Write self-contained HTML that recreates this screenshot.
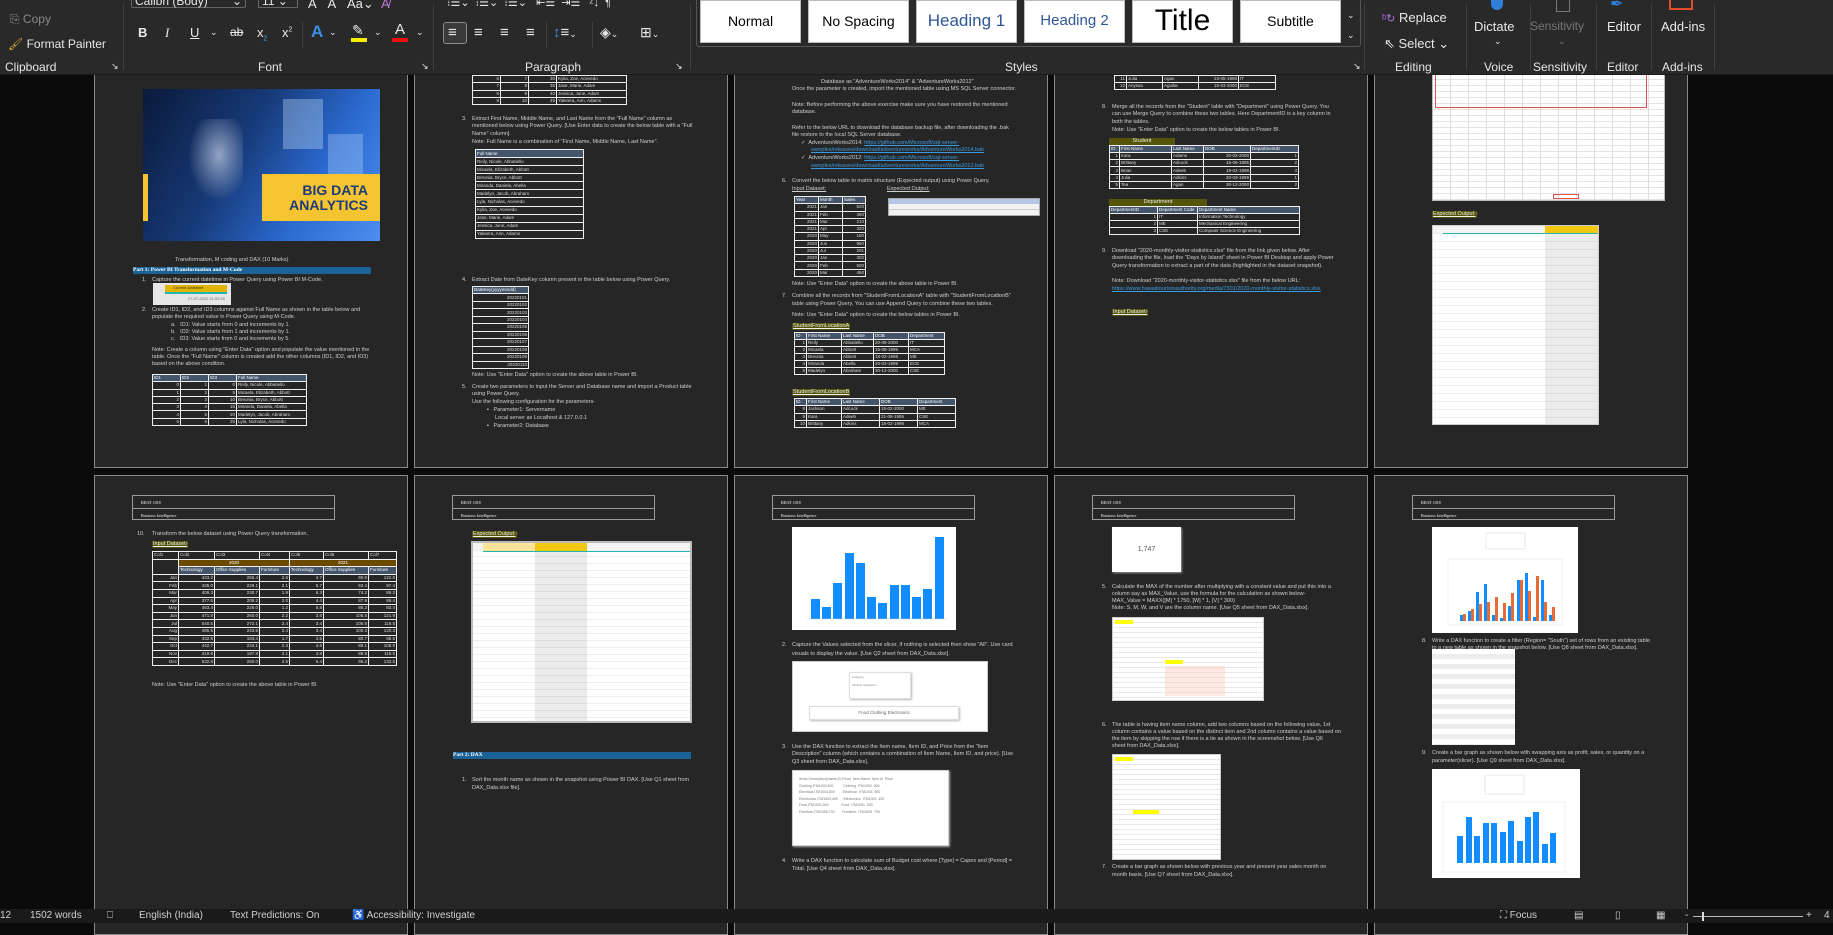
<!DOCTYPE html>
<html><head><meta charset="utf-8">
<style>
*{margin:0;padding:0;box-sizing:border-box}
body{width:1833px;height:923px;background:#0b0b0b;position:relative;overflow:hidden;font-family:"Liberation Sans",sans-serif}
.rb{position:absolute;left:0;top:0;width:1833px;height:75px;background:#292929;z-index:10;border-bottom:1px solid #1a1a1a}
.r{position:absolute;color:#e8e8e8;font-size:12px;white-space:nowrap}
.gl{position:absolute;top:60px;color:#e6e6e6;font-size:12px;white-space:nowrap}
.sep{position:absolute;top:4px;width:1px;height:66px;background:#3f3f3f}
.sb{position:absolute;top:0;height:43px;background:#fff;border:1px solid #bbb;color:#000;font-size:14px;text-align:center;line-height:40px}
.st{position:absolute;left:0;top:909px;width:1833px;height:14px;background:#1a1a1a;z-index:10}
.s{position:absolute;top:0;font-size:10px;color:#d0d0d0;white-space:nowrap;line-height:14px}
.pg{position:absolute;width:314px;background:#262626;border:1px solid #8a8a8a;overflow:hidden}
.t{position:absolute;font-size:5.5px;color:#cfcfcf;white-space:nowrap;line-height:7px}
.n{position:absolute;font-size:5.5px;color:#cfcfcf;line-height:7px}
.lab{position:absolute;font-size:5.5px;color:#eee;background:#55550a;line-height:7px;padding:0 1px;text-decoration:underline}
table.g{position:absolute;border-collapse:collapse;font-size:4.5px;color:#ddd;table-layout:fixed}
table.g td{border:1px solid #f0f0f0;padding:0 1px;overflow:hidden;white-space:nowrap;line-height:4px}
table.g tr.h td{background:#44546a;color:#fff}
.img{position:absolute;background:#fff;overflow:hidden}
.hb{position:absolute;left:37px;top:19px;width:203px;height:25px;border:1px solid #9a9a9a}
.hb div{height:12px;font-size:4px;color:#bbb;padding:4px 0 0 8px;font-weight:bold;font-family:"Liberation Serif",serif}
.hb div+div{border-top:1px solid #9a9a9a}
.bar{position:absolute;height:7px;background:#1b6396;font-size:5.5px;color:#fff;font-weight:bold;line-height:7px;font-family:"Liberation Serif",serif}
.lnk{color:#3b9be0;text-decoration:underline}
</style></head><body>

<!-- RIBBON -->
<div class="rb">
  <div class="r" style="left:131px;top:-6px;width:115px;height:14px;border:1px solid #666;border-top:none;border-radius:2px;padding-left:3px;font-size:12px">Calibri (Body) <span style="float:right;padding-right:3px">⌄</span></div>
  <div class="r" style="left:258px;top:-6px;width:40px;height:14px;border:1px solid #666;border-top:none;padding-left:3px">11 ⌄</div>
  <div class="r" style="left:308px;top:-4px;font-size:13px">A&nbsp;&nbsp;&nbsp;A&nbsp;&nbsp;&nbsp;Aa⌄&nbsp;&nbsp;<span style="color:#c07ad8">A̸</span></div>
  <div class="r" style="left:10px;top:12px;color:#8a8a8a;font-size:12px">⎘ Copy</div>
  <div class="r" style="left:8px;top:37px;font-size:12px"><span style="color:#e0b030">🖌</span> Format Painter</div>
  <div class="gl" style="left:5px">Clipboard</div><div class="r" style="left:111px;top:61px;font-size:9px">↘</div>
  <div class="sep" style="left:123px"></div>
  <div class="r" style="left:138px;top:25px;font-size:13px;font-weight:bold">B</div>
  <div class="r" style="left:165px;top:25px;font-size:13px;font-style:italic;font-family:'Liberation Serif'">I</div>
  <div class="r" style="left:190px;top:25px;font-size:13px;text-decoration:underline">U</div><div class="r" style="left:210px;top:27px;font-size:9px">⌄</div>
  <div class="r" style="left:230px;top:25px;font-size:12px;text-decoration:line-through">ab</div>
  <div class="r" style="left:257px;top:25px;font-size:13px">x<sub style="font-size:7px;color:#5aa0e0">2</sub></div>
  <div class="r" style="left:282px;top:25px;font-size:13px">x<sup style="font-size:7px">2</sup></div>
  <div class="sep" style="left:302px;top:22px;height:26px"></div>
  <div class="r" style="left:311px;top:22px;font-size:17px;color:#3a8ee6;font-weight:bold">A</div><div class="r" style="left:329px;top:27px;font-size:9px">⌄</div>
  <div class="r" style="left:352px;top:22px;font-size:14px">✎</div><div style="position:absolute;left:351px;top:38px;width:16px;height:4px;background:#f5ef00"></div><div class="r" style="left:374px;top:27px;font-size:9px">⌄</div>
  <div class="r" style="left:395px;top:21px;font-size:15px">A</div><div style="position:absolute;left:392px;top:38px;width:16px;height:4px;background:#e81010"></div><div class="r" style="left:416px;top:27px;font-size:9px">⌄</div>
  <div class="gl" style="left:258px">Font</div><div class="r" style="left:421px;top:61px;font-size:9px">↘</div>
  <div class="sep" style="left:433px"></div>
  <div class="r" style="left:447px;top:-4px;font-size:11px">⁝☰⌄&nbsp;&nbsp;⁝☰⌄&nbsp;&nbsp;⁝☰⌄&nbsp;&nbsp;&nbsp;⇤☰&nbsp;&nbsp;⇥☰&nbsp;&nbsp;&nbsp;ᶻ↓&nbsp;&nbsp;¶</div>
  <div style="position:absolute;left:443px;top:22px;width:24px;height:22px;border:1px solid #8a8a8a;border-radius:3px;background:#3a3a3a"></div>
  <div class="r" style="left:448px;top:24px;font-size:15px">≡</div>
  <div class="r" style="left:474px;top:24px;font-size:15px">≡</div>
  <div class="r" style="left:500px;top:24px;font-size:15px">≡</div>
  <div class="r" style="left:526px;top:24px;font-size:15px">≡</div>
  <div class="sep" style="left:546px;top:22px;height:26px"></div>
  <div class="r" style="left:553px;top:24px;font-size:15px"><span style="color:#3a8ee6">↕</span>≡<span style="font-size:9px">⌄</span></div>
  <div class="sep" style="left:592px;top:22px;height:26px"></div>
  <div class="r" style="left:600px;top:24px;font-size:14px">◈<span style="font-size:9px">⌄</span></div>
  <div class="r" style="left:640px;top:24px;font-size:14px">⊞<span style="font-size:9px">⌄</span></div>
  <div class="gl" style="left:525px">Paragraph</div><div class="r" style="left:675px;top:61px;font-size:9px">↘</div>
  <div class="sep" style="left:690px"></div>
  <div style="position:absolute;left:696px;top:-2px;width:665px;height:49px;border:1px solid #555;border-radius:3px"></div>
  <div class="sb" style="left:700px;width:101px">Normal</div>
  <div class="sb" style="left:808px;width:101px">No Spacing</div>
  <div class="sb" style="left:916px;width:101px;color:#2f5597;font-size:17px">Heading 1</div>
  <div class="sb" style="left:1024px;width:101px;color:#2f5597;font-size:15px">Heading 2</div>
  <div class="sb" style="left:1132px;width:101px;font-size:30px;font-weight:300">Title</div>
  <div class="sb" style="left:1240px;width:101px;font-size:14px">Subtitle</div>
  <div class="r" style="left:1347px;top:10px;font-size:9px">⌄</div>
  <div class="r" style="left:1347px;top:30px;font-size:9px">⌄</div>
  <div class="gl" style="left:1005px">Styles</div><div class="r" style="left:1353px;top:61px;font-size:9px">↘</div>
  <div class="sep" style="left:1364px"></div>
  <div class="r" style="left:1382px;top:10px;font-size:13px"><span style="color:#b070e0;font-size:11px">ᵇ↻</span> Replace</div>
  <div class="r" style="left:1384px;top:36px;font-size:13px">⇖ Select ⌄</div>
  <div class="gl" style="left:1395px">Editing</div>
  <div class="sep" style="left:1466px"></div>
  <div style="position:absolute;left:1491px;top:-6px;width:12px;height:16px;border-radius:6px;background:#2f7fd8"></div>
  <div class="r" style="left:1474px;top:19px;font-size:13px">Dictate</div><div class="r" style="left:1494px;top:36px;font-size:9px">⌄</div>
  <div class="gl" style="left:1484px">Voice</div>
  <div class="sep" style="left:1530px"></div>
  <div style="position:absolute;left:1556px;top:-4px;width:14px;height:16px;border:1px solid #777"></div>
  <div class="r" style="left:1530px;top:19px;font-size:12px;color:#777">Sensitivity</div><div class="r" style="left:1558px;top:36px;font-size:9px;color:#777">⌄</div>
  <div class="gl" style="left:1533px">Sensitivity</div>
  <div class="sep" style="left:1596px"></div>
  <div class="r" style="left:1610px;top:-6px;font-size:16px;color:#2f7fd8">✒</div>
  <div class="r" style="left:1607px;top:19px;font-size:13px">Editor</div>
  <div class="gl" style="left:1607px">Editor</div>
  <div class="sep" style="left:1651px"></div>
  <div style="position:absolute;left:1669px;top:-4px;width:24px;height:14px;border:2px solid #e0502a"></div>
  <div class="r" style="left:1661px;top:19px;font-size:13px">Add-ins</div>
  <div class="gl" style="left:1662px">Add-ins</div>
  <div class="sep" style="left:1714px"></div>
</div>

<!-- ROW 1 -->
<div class="pg" style="left:94px;top:40px;height:428px">
 <div style="position:absolute;left:48px;top:48px;width:237px;height:152px;background:linear-gradient(120deg,#0a1a3a 0%,#173a78 40%,#2b6ad0 70%,#4c8ff0 100%);overflow:hidden">
  <div style="position:absolute;left:40px;top:30px;width:60px;height:90px;background:radial-gradient(ellipse at 60% 40%,rgba(200,210,230,.7),rgba(0,0,0,0) 60%)"></div>
  <div style="position:absolute;left:140px;top:10px;width:40px;height:50px;background:rgba(200,230,255,.35)"></div>
  <div style="position:absolute;left:185px;top:45px;width:35px;height:40px;background:rgba(200,230,255,.3)"></div>
  <div style="position:absolute;left:0;top:85px;width:5px;height:47px;background:#f5c531"></div>
  <div style="position:absolute;left:119px;top:85px;width:118px;height:47px;background:#f5c531;color:#1d3a7a;font-weight:bold;font-size:14px;line-height:15px;text-align:right;padding:9px 12px 0 0">BIG DATA<br>ANALYTICS</div>
 </div>
 <div class="t" style="left:80px;top:216px">Transformation, M coding and DAX (10 Marks)</div>
 <div class="bar" style="left:38px;top:226px;width:238px">Part 1: Power BI Transformation and M-Code</div>
 <div class="n" style="left:47px;top:236px">1.</div><div class="t" style="left:57px;top:236px">Capture the current datetime in Power Query using Power BI M-Code.</div>
 <div class="img" style="left:58px;top:242px;width:78px;height:22px;background:#e6e6e6"><div style="position:absolute;left:12px;top:2px;width:62px;height:7px;background:#e0b400;font-size:4px;color:#333;padding-left:8px">Current Datetime</div><div style="position:absolute;left:12px;top:9px;width:62px;height:2px;background:#1fb5b0"></div><div style="position:absolute;right:6px;top:13px;font-size:4px;color:#666">27-07-2022 21:02:50</div></div>
 <div class="n" style="left:47px;top:266px">2.</div><div class="t" style="left:57px;top:266px">Create ID1, ID2, and ID3 columns against Full Name as shown in the table below and</div>
 <div class="t" style="left:57px;top:273px">populate the required value in Power Query using M-Code.</div>
 <div class="t" style="left:76px;top:281px">a.&nbsp;&nbsp; ID1: Value starts from 0 and increments by 1.</div>
 <div class="t" style="left:76px;top:288px">b.&nbsp;&nbsp; ID2: Value starts from 1 and increments by 1.</div>
 <div class="t" style="left:76px;top:295px">c.&nbsp;&nbsp; ID3: Value starts from 0 and increments by 5.</div>
 <div class="t" style="left:57px;top:306px">Note: Create a column using "Enter Data" option and populate the value mentioned in the</div>
 <div class="t" style="left:57px;top:313px">table. Once the "Full Name" column is created add the other columns (ID1, ID2, and ID3)</div>
 <div class="t" style="left:57px;top:320px">based on the above condition.</div>
 <table class="g" style="left:57px;top:333px;width:155px;height:52px"><colgroup><col style="width:28px"><col style="width:28px"><col style="width:28px"><col></colgroup>
 <tr class="h"><td>ID1</td><td>ID2</td><td>ID3</td><td>Full Name</td></tr>
 <tr><td align=right>0</td><td align=right>1</td><td align=right>0</td><td>Reily, Nicole, Abbatiello</td></tr>
 <tr><td align=right>1</td><td align=right>2</td><td align=right>5</td><td>Micaela, Elizabeth, Abbott</td></tr>
 <tr><td align=right>2</td><td align=right>3</td><td align=right>10</td><td>Breonia, Bryce, Abbott</td></tr>
 <tr><td align=right>3</td><td align=right>4</td><td align=right>15</td><td>Miranda, Daniela, Abella</td></tr>
 <tr><td align=right>4</td><td align=right>5</td><td align=right>20</td><td>Madelyn, Jacob, Abraham</td></tr>
 <tr><td align=right>5</td><td align=right>6</td><td align=right>25</td><td>Lyla, Nicholas, Acevedo</td></tr></table>
</div>

<div class="pg" style="left:414px;top:40px;height:428px">
 <table class="g" style="left:57px;top:34px;width:155px;height:30px"><colgroup><col style="width:28px"><col style="width:28px"><col style="width:28px"><col></colgroup>
 <tr><td align=right>6</td><td align=right>7</td><td align=right>30</td><td>Kylia, Zoe, Acevedo</td></tr>
 <tr><td align=right>7</td><td align=right>8</td><td align=right>35</td><td>Jase, Marie, Adam</td></tr>
 <tr><td align=right>8</td><td align=right>9</td><td align=right>40</td><td>Jessica, June, Adam</td></tr>
 <tr><td align=right>9</td><td align=right>10</td><td align=right>45</td><td>Yakeera, Ann, Adams</td></tr></table>
 <div class="n" style="left:47px;top:75px">3.</div><div class="t" style="left:57px;top:75px">Extract First Name, Middle Name, and Last Name from the "Full Name" column as</div>
 <div class="t" style="left:57px;top:82px">mentioned below using Power Query. [Use Enter data to create the below table with a "Full</div>
 <div class="t" style="left:57px;top:90px">Name" column].</div>
 <div class="t" style="left:57px;top:98px">Note: Full Name is a combination of "First Name, Middle Name, Last Name".</div>
 <table class="g" style="left:60px;top:108px;width:109px;height:90px">
 <tr class="h"><td>Full Name</td></tr><tr><td>Reily, Nicole, Abbatiello</td></tr><tr><td>Micaela, Elizabeth, Abbott</td></tr><tr><td>Breonia, Bryce, Abbott</td></tr><tr><td>Miranda, Daniela, Abella</td></tr><tr><td>Madelyn, Jacob, Abraham</td></tr><tr><td>Lyla, Nicholas, Acevedo</td></tr><tr><td>Kylia, Zoe, Acevedo</td></tr><tr><td>Jase, Marie, Adam</td></tr><tr><td>Jessica, June, Adam</td></tr><tr><td>Yakeera, Ann, Adams</td></tr></table>
 <div class="n" style="left:47px;top:236px">4.</div><div class="t" style="left:57px;top:236px">Extract Date from DateKey column present in the table below using Power Query.</div>
 <table class="g" style="left:57px;top:245px;width:57px;height:83px">
 <tr class="h"><td>DateKey(yyyymmdd)</td></tr><tr><td align=right>20220101</td></tr><tr><td align=right>20220102</td></tr><tr><td align=right>20220103</td></tr><tr><td align=right>20220104</td></tr><tr><td align=right>20220105</td></tr><tr><td align=right>20220106</td></tr><tr><td align=right>20220107</td></tr><tr><td align=right>20220108</td></tr><tr><td align=right>20220109</td></tr><tr><td align=right>20220110</td></tr></table>
 <div class="t" style="left:57px;top:331px">Note: Use "Enter Data" option to create the above table in Power BI.</div>
 <div class="n" style="left:47px;top:343px">5.</div><div class="t" style="left:57px;top:343px">Create two parameters to input the Server and Database name and import a Product table</div>
 <div class="t" style="left:57px;top:350px">using Power Query.</div>
 <div class="t" style="left:57px;top:358px">Use the following configuration for the parameters-</div>
 <div class="t" style="left:72px;top:366px">▪&nbsp;&nbsp; Parameter1: Servername</div>
 <div class="t" style="left:80px;top:374px">Local server as Localhost &amp; 127.0.0.1</div>
 <div class="t" style="left:72px;top:382px">▪&nbsp;&nbsp; Parameter2: Database</div>
</div>

<div class="pg" style="left:734px;top:40px;height:428px">
 <div class="t" style="left:86px;top:38px">Database as "AdventureWorks2014" &amp; "AdventureWorks2012"</div>
 <div class="t" style="left:57px;top:45px">Once the parameter is created, import the mentioned table using MS SQL Server connector.</div>
 <div class="t" style="left:57px;top:61px">Note: Before performing the above exercise make sure you have restored the mentioned</div>
 <div class="t" style="left:57px;top:68px">database.</div>
 <div class="t" style="left:57px;top:84px">Refer to the below URL to download the database backup file, after downloading the .bak</div>
 <div class="t" style="left:57px;top:91px">file restore to the local SQL Server database.</div>
 <div class="t" style="left:66px;top:99px">✓&nbsp; AdventureWorks2014: <span class="lnk">https://github.com/Microsoft/sql-server-</span></div>
 <div class="t" style="left:76px;top:106px"><span class="lnk">samples/releases/download/adventureworks/AdventureWorks2014.bak</span></div>
 <div class="t" style="left:66px;top:114px">✓&nbsp; AdventureWorks2012: <span class="lnk">https://github.com/Microsoft/sql-server-</span></div>
 <div class="t" style="left:76px;top:122px"><span class="lnk">samples/releases/download/adventureworks/AdventureWorks2012.bak</span></div>
 <div class="n" style="left:47px;top:137px">6.</div><div class="t" style="left:57px;top:137px">Convert the below table to matrix structure (Expected output) using Power Query.</div>
 <div class="t" style="left:57px;top:145px;text-decoration:underline">Input Dataset:</div><div class="t" style="left:152px;top:145px;text-decoration:underline">Expected Output:</div>
 <table class="g" style="left:59px;top:155px;width:72px;height:81px"><colgroup><col style="width:24px"><col style="width:24px"><col></colgroup>
 <tr class="h"><td>Year</td><td>Month</td><td>Sales</td></tr>
 <tr><td align=right>2021</td><td>Jan</td><td align=right>520</td></tr><tr><td align=right>2021</td><td>Feb</td><td align=right>360</td></tr><tr><td align=right>2021</td><td>Mar</td><td align=right>210</td></tr><tr><td align=right>2021</td><td>Apr</td><td align=right>320</td></tr><tr><td align=right>2020</td><td>May</td><td align=right>160</td></tr><tr><td align=right>2020</td><td>Jun</td><td align=right>960</td></tr><tr><td align=right>2020</td><td>Jul</td><td align=right>201</td></tr><tr><td align=right>2020</td><td>Jan</td><td align=right>302</td></tr><tr><td align=right>2020</td><td>Feb</td><td align=right>500</td></tr><tr><td align=right>2020</td><td>Mar</td><td align=right>450</td></tr></table>
 <div class="img" style="left:153px;top:157px;width:152px;height:18px;background:#f2f2f2;border:1px solid #aaa"><div style="height:5px;background:#b4c7e7"></div><div style="height:1px;margin-top:5px;background:#ccc"></div></div>
 <div class="t" style="left:57px;top:240px">Note: Use "Enter Data" option to create the above table in Power BI.</div>
 <div class="n" style="left:47px;top:252px">7.</div><div class="t" style="left:57px;top:252px">Combine all the records from "StudentFromLocationA" table with "StudentFromLocationB"</div>
 <div class="t" style="left:57px;top:260px">table using Power Query. You can use Append Query to combine these two tables.</div>
 <div class="t" style="left:57px;top:271px">Note: Use "Enter Data" option to create the below tables in Power BI.</div>
 <div class="lab" style="left:57px;top:282px">StudentFromLocationA</div><div class="t" style="left:98px;top:282px">:</div>
 <table class="g" style="left:59px;top:291px;width:151px;height:43px"><colgroup><col style="width:12px"><col style="width:35px"><col style="width:32px"><col style="width:35px"><col></colgroup>
 <tr class="h"><td>ID</td><td>First Name</td><td>Last Name</td><td>DOB</td><td>Department</td></tr>
 <tr><td align=right>1</td><td>Reily</td><td>Abbatiello</td><td>20-08-2000</td><td>IT</td></tr><tr><td align=right>2</td><td>Micaela</td><td>Abbott</td><td>15-08-1995</td><td>MCA</td></tr><tr><td align=right>3</td><td>Breonia</td><td>Abbott</td><td>18-02-1998</td><td>ME</td></tr><tr><td align=right>4</td><td>Miranda</td><td>Abella</td><td>20-03-1999</td><td>ECE</td></tr><tr><td align=right>5</td><td>Madelyn</td><td>Abraham</td><td>30-12-2000</td><td>CSE</td></tr></table>
 <div class="lab" style="left:57px;top:348px">StudentFromLocationB</div><div class="t" style="left:98px;top:348px">:</div>
 <table class="g" style="left:59px;top:357px;width:162px;height:30px"><colgroup><col style="width:12px"><col style="width:35px"><col style="width:38px"><col style="width:38px"><col></colgroup>
 <tr class="h"><td>ID</td><td>First Name</td><td>Last Name</td><td>DOB</td><td>Department</td></tr>
 <tr><td align=right>8</td><td>Jackson</td><td>Adcock</td><td>15-02-2000</td><td>ME</td></tr><tr><td align=right>9</td><td>Kara</td><td>Adeeb</td><td>21-08-1995</td><td>CSE</td></tr><tr><td align=right>10</td><td>Brittany</td><td>Adkins</td><td>18-02-1995</td><td>MCA</td></tr></table>
</div>

<div class="pg" style="left:1054px;top:40px;height:428px">
 <table class="g" style="left:59px;top:34px;width:162px;height:15px"><colgroup><col style="width:12px"><col style="width:36px"><col style="width:36px"><col style="width:40px"><col></colgroup>
 <tr><td align=right>11</td><td>Julia</td><td>Agan</td><td align=right>23-05-1998</td><td>IT</td></tr><tr><td align=right>12</td><td>Anyssa</td><td>Aguilar</td><td align=right>15-03-2000</td><td>ECE</td></tr></table>
 <div class="n" style="left:47px;top:63px">8.</div><div class="t" style="left:57px;top:63px">Merge all the records from the "Student" table with "Department" using Power Query. You</div>
 <div class="t" style="left:57px;top:70px">can use Merge Query to combine these two tables. Here DepartmentID is a key column in</div>
 <div class="t" style="left:57px;top:78px">both the tables.</div>
 <div class="t" style="left:57px;top:86px">Note: Use "Enter Data" option to create the below tables in Power BI.</div>
 <div style="position:absolute;left:54px;top:97px;width:66px;height:7px;background:#55550a;font-size:5.5px;color:#eee;text-align:center;line-height:7px">Student</div>
 <table class="g" style="left:54px;top:104px;width:190px;height:44px"><colgroup><col style="width:10px"><col style="width:52px"><col style="width:32px"><col style="width:47px"><col></colgroup>
 <tr class="h"><td>ID</td><td>First Name</td><td>Last Name</td><td>DOB</td><td>DepartmentID</td></tr>
 <tr><td align=right>1</td><td>Kara</td><td>Adams</td><td align=right>20-02-2000</td><td align=right>1</td></tr><tr><td align=right>2</td><td>Brittany</td><td>Adcock</td><td align=right>15-08-1995</td><td align=right>2</td></tr><tr><td align=right>3</td><td>Brian</td><td>Adeeb</td><td align=right>18-02-1998</td><td align=right>3</td></tr><tr><td align=right>4</td><td>Julia</td><td>Adkins</td><td align=right>20-03-1999</td><td align=right>1</td></tr><tr><td align=right>5</td><td>Tea</td><td>Agan</td><td align=right>30-12-2000</td><td align=right>2</td></tr></table>
 <div style="position:absolute;left:54px;top:158px;width:98px;height:7px;background:#55550a;font-size:5.5px;color:#eee;text-align:center;line-height:7px">Department</div>
 <table class="g" style="left:54px;top:165px;width:191px;height:29px"><colgroup><col style="width:48px"><col style="width:40px"><col></colgroup>
 <tr class="h"><td>DepartmentID</td><td>Department Code</td><td>Department Name</td></tr>
 <tr><td align=right>1</td><td>IT</td><td>Information Technology</td></tr><tr><td align=right>2</td><td>ME</td><td>Mechanical Engineering</td></tr><tr><td align=right>3</td><td>CSE</td><td>Computer Science Engineering</td></tr></table>
 <div class="n" style="left:47px;top:207px">9.</div><div class="t" style="left:57px;top:207px">Download "2020-monthly-visitor-statistics.xlsx" file from the link given below. After</div>
 <div class="t" style="left:57px;top:214px">downloading the file, load the "Days by Island" sheet in Power BI Desktop and apply Power</div>
 <div class="t" style="left:57px;top:222px">Query transformation to extract a part of the data (highlighted in the dataset snapshot).</div>
 <div class="t" style="left:57px;top:237px">Note: Download "2020-monthly-visitor-statistics.xlsx" file from the below URL:</div>
 <div class="t" style="left:57px;top:245px"><span class="lnk">https://www.hawaiitourismauthority.org/media/7301/2020-monthly-visitor-statistics.xlsx</span></div>
 <div class="lab" style="left:57px;top:268px">Input Dataset:</div><div class="t" style="left:91px;top:268px">-</div>
</div>

<div class="pg" style="left:1374px;top:40px;height:428px">
 <div class="img" style="left:57px;top:20px;width:233px;height:140px;border:1px solid #bbb;background:#fff repeating-linear-gradient(to bottom,#fff 0 5px,#e4e4e4 5px 6px)">
  <div style="position:absolute;left:0;top:0;width:233px;height:140px;background:repeating-linear-gradient(to right,transparent 0 17px,#ddd 17px 18px)"></div>
  <div style="position:absolute;left:2px;top:8px;width:212px;height:38px;border:1px solid #e05050"></div>
  <div style="position:absolute;left:120px;top:132px;width:26px;height:5px;border:1px solid #e05050"></div>
 </div>
 <div class="lab" style="left:57px;top:170px">Expected Output:</div><div class="t" style="left:101px;top:170px">-</div>
 <div class="img" style="left:57px;top:184px;width:167px;height:200px;border:1px solid #ccc;background:#fff repeating-linear-gradient(to bottom,#fff 0 7px,#eee 7px 8px)">
  <div style="position:absolute;left:0;top:0;width:167px;height:7px;background:#f3f3f3"></div>
  <div style="position:absolute;left:112px;top:0;width:55px;height:7px;background:#f2c811"></div>
  <div style="position:absolute;left:10px;top:7px;width:157px;height:1px;background:#1fb5b0"></div>
  <div style="position:absolute;left:112px;top:8px;width:55px;height:192px;background:rgba(0,0,0,.08)"></div>
 </div>
</div>

<!-- ROW 2 -->
<div class="pg" style="left:94px;top:475px;height:460px">
 <div class="hb"><div>BDAT 1018</div><div>Business Intelligence</div></div>
 <div class="n" style="left:42px;top:55px">10.</div><div class="t" style="left:57px;top:55px">Transform the below dataset using Power Query transformation.</div>
 <div class="lab" style="left:57px;top:65px">Input Dataset:</div><div class="t" style="left:91px;top:65px">-</div>
 <table class="g" style="left:57px;top:75px;width:245px;height:115px"><colgroup><col style="width:26px"><col style="width:36px"><col style="width:45px"><col style="width:30px"><col style="width:34px"><col style="width:45px"><col></colgroup>
 <tr><td>Col1</td><td>Col2</td><td>Col3</td><td>Col4</td><td>Col5</td><td>Col6</td><td>Col7</td></tr>
 <tr><td rowspan=2></td><td colspan=3 style="background:#6b4a00;text-align:center;color:#fff">2020</td><td colspan=3 style="background:#6b4a00;text-align:center;color:#fff">2021</td></tr>
 <tr class="h"><td>Technology</td><td>Office Supplies</td><td>Furniture</td><td>Technology</td><td>Office Supplies</td><td>Furniture</td></tr>
 <tr><td align=right>Jan</td><td align=right>433.2</td><td align=right>255.4</td><td align=right>2.6</td><td align=right>4.7</td><td align=right>90.9</td><td align=right>122.8</td></tr>
 <tr><td align=right>Feb</td><td align=right>435.0</td><td align=right>229.1</td><td align=right>2.1</td><td align=right>5.7</td><td align=right>93.4</td><td align=right>97.4</td></tr>
 <tr><td align=right>Mar</td><td align=right>409.3</td><td align=right>230.7</td><td align=right>1.9</td><td align=right>6.3</td><td align=right>74.2</td><td align=right>89.2</td></tr>
 <tr><td align=right>Apr</td><td align=right>377.6</td><td align=right>209.2</td><td align=right>2.0</td><td align=right>4.4</td><td align=right>87.9</td><td align=right>86.4</td></tr>
 <tr><td align=right>May</td><td align=right>463.4</td><td align=right>226.0</td><td align=right>1.2</td><td align=right>5.8</td><td align=right>86.3</td><td align=right>83.4</td></tr>
 <tr><td align=right>Jun</td><td align=right>471.8</td><td align=right>260.0</td><td align=right>2.2</td><td align=right>3.8</td><td align=right>106.5</td><td align=right>121.9</td></tr>
 <tr><td align=right>Jul</td><td align=right>540.5</td><td align=right>272.1</td><td align=right>2.4</td><td align=right>3.4</td><td align=right>106.5</td><td align=right>116.5</td></tr>
 <tr><td align=right>Aug</td><td align=right>485.5</td><td align=right>243.6</td><td align=right>2.4</td><td align=right>3.4</td><td align=right>100.3</td><td align=right>120.3</td></tr>
 <tr><td align=right>Sep</td><td align=right>432.8</td><td align=right>183.4</td><td align=right>1.7</td><td align=right>3.5</td><td align=right>80.7</td><td align=right>95.6</td></tr>
 <tr><td align=right>Oct</td><td align=right>442.7</td><td align=right>234.1</td><td align=right>2.3</td><td align=right>4.6</td><td align=right>88.1</td><td align=right>108.9</td></tr>
 <tr><td align=right>Nov</td><td align=right>419.8</td><td align=right>197.8</td><td align=right>2.1</td><td align=right>4.8</td><td align=right>89.9</td><td align=right>116.5</td></tr>
 <tr><td align=right>Dec</td><td align=right>532.8</td><td align=right>260.0</td><td align=right>2.5</td><td align=right>6.4</td><td align=right>96.2</td><td align=right>133.5</td></tr></table>
 <div class="t" style="left:57px;top:206px">Note: Use "Enter Data" option to create the above table in Power BI.</div>
</div>

<div class="pg" style="left:414px;top:475px;height:460px">
 <div class="hb"><div>BDAT 1018</div><div>Business Intelligence</div></div>
 <div class="lab" style="left:57px;top:55px">Expected Output:</div><div class="t" style="left:101px;top:55px">-</div>
 <div class="img" style="left:56px;top:65px;width:221px;height:182px;border:2px solid #bbb;background:#fff repeating-linear-gradient(to bottom,#fff 0 6px,#eee 6px 7px)">
  <div style="position:absolute;left:0;top:0;width:221px;height:8px;background:#f3f3f3"></div>
  <div style="position:absolute;left:10px;top:0;width:52px;height:8px;background:#fbe39a"></div>
  <div style="position:absolute;left:62px;top:0;width:52px;height:8px;background:#f2c811"></div>
  <div style="position:absolute;left:10px;top:8px;width:211px;height:1px;background:#1fb5b0"></div>
  <div style="position:absolute;left:62px;top:9px;width:52px;height:173px;background:rgba(0,0,0,.08)"></div>
 </div>
 <div class="bar" style="left:38px;top:276px;width:238px">Part 2: DAX</div>
 <div class="n" style="left:47px;top:301px">1.</div><div class="t" style="left:57px;top:301px">Sort the month name as shown in the snapshot using Power BI DAX. [Use Q1 sheet from</div>
 <div class="t" style="left:57px;top:309px">DAX_Data.xlsx file].</div>
</div>

<div class="pg" style="left:734px;top:475px;height:460px">
 <div class="hb"><div>BDAT 1018</div><div>Business Intelligence</div></div>
 <svg style="position:absolute;left:57px;top:51px" width="164" height="103" viewBox="0 0 164 103"><rect width="164" height="103" fill="#fff"/>
  <g fill="#118dff"><rect x="19" y="72" width="9" height="20"/><rect x="30" y="80" width="9" height="12"/><rect x="41" y="56" width="9" height="36"/><rect x="53" y="26" width="9" height="66"/><rect x="64" y="36" width="9" height="56"/><rect x="75" y="70" width="9" height="22"/><rect x="86" y="76" width="9" height="16"/><rect x="98" y="58" width="9" height="34"/><rect x="109" y="58" width="9" height="34"/><rect x="120" y="70" width="9" height="22"/><rect x="131" y="62" width="9" height="30"/><rect x="143" y="10" width="9" height="82"/></g>
  <line x1="15" y1="92" x2="155" y2="92" stroke="#ccc" stroke-width=".5"/></svg>
 <div class="n" style="left:47px;top:166px">2.</div><div class="t" style="left:57px;top:166px">Capture the Values selected from the slicer, if nothing is selected then show "All". Use card</div>
 <div class="t" style="left:57px;top:175px">visuals to display the value. [Use Q2 sheet from DAX_Data.xlsx].</div>
 <div class="img" style="left:57px;top:185px;width:196px;height:71px;border:1px solid #ccc">
  <div style="position:absolute;left:56px;top:10px;width:62px;height:27px;border:1px solid #ddd;box-shadow:1px 1px 2px #bbb;font-size:3px;color:#888;padding:2px">Category<br><br>Multiple selections</div>
  <div style="position:absolute;left:16px;top:44px;width:150px;height:14px;border:1px solid #ddd;box-shadow:1px 1px 2px #bbb;font-size:4.5px;color:#666;text-align:center;line-height:12px">Food Clothing Electronics</div>
 </div>
 <div class="n" style="left:47px;top:268px">3.</div><div class="t" style="left:57px;top:268px">Use the DAX function to extract the Item name, Item ID, and Price from the "Item</div>
 <div class="t" style="left:57px;top:275px">Description" column (which contains a combination of Item Name, Item ID, and price). [Use</div>
 <div class="t" style="left:57px;top:283px">Q3 sheet from DAX_Data.xlsx].</div>
 <div class="img" style="left:57px;top:294px;width:157px;height:76px;border:1px solid #ccc;box-shadow:1px 1px 2px #aaa;font-size:3.5px;color:#777;padding:5px 6px;line-height:6.5px">Items Description(Name,ID,Price)&nbsp; Item Name&nbsp; Item Id&nbsp; Price<br>Clothing,ITM1002,600&nbsp;&nbsp;&nbsp;&nbsp;&nbsp;&nbsp;&nbsp;&nbsp;&nbsp; Clothing&nbsp; ITM1002&nbsp; 600<br>Electrical,ITM1004,800&nbsp;&nbsp;&nbsp;&nbsp;&nbsp;&nbsp;&nbsp; Electrical&nbsp; ITM1004&nbsp; 800<br>Electronics,ITM1003,400&nbsp;&nbsp;&nbsp;&nbsp;&nbsp; Electronics&nbsp; ITM1003&nbsp; 400<br>Food,ITM1001,500&nbsp;&nbsp;&nbsp;&nbsp;&nbsp;&nbsp;&nbsp;&nbsp;&nbsp;&nbsp;&nbsp;&nbsp; Food&nbsp; ITM1001&nbsp; 500<br>Furniture,ITM1005,700&nbsp;&nbsp;&nbsp;&nbsp;&nbsp;&nbsp;&nbsp; Furniture&nbsp; ITM1005&nbsp; 700</div>
 <div class="n" style="left:47px;top:382px">4.</div><div class="t" style="left:57px;top:382px">Write a DAX function to calculate sum of Budget cost where [Type] = Capex and [Period] =</div>
 <div class="t" style="left:57px;top:390px">Total. [Use Q4 sheet from DAX_Data.xlsx].</div>
</div>

<div class="pg" style="left:1054px;top:475px;height:460px">
 <div class="hb"><div>BDAT 1018</div><div>Business Intelligence</div></div>
 <div class="img" style="left:57px;top:51px;width:69px;height:45px;box-shadow:1px 1px 2px #999;font-size:7px;color:#555;text-align:center;line-height:45px">1,747</div>
 <div class="n" style="left:47px;top:108px">5.</div><div class="t" style="left:57px;top:108px">Calculate the MAX of the number after multiplying with a constant value and put this into a</div>
 <div class="t" style="left:57px;top:115px">column say as MAX_Value, use the formula for the calculation as shown below-</div>
 <div class="t" style="left:57px;top:122px">MAX_Value = MAXX([M] * 1750, [W] * 1, [V] * 300)</div>
 <div class="t" style="left:57px;top:129px">Note: S, M, W, and V are the column name. [Use Q5 sheet from DAX_Data.xlsx].</div>
 <div class="img" style="left:57px;top:141px;width:152px;height:84px;border:1px solid #ccc;background:#fff repeating-linear-gradient(to bottom,#fff 0 4px,#e8e8e8 4px 5px)"><div style="position:absolute;left:2px;top:2px;width:18px;height:4px;background:#ff0"></div><div style="position:absolute;left:52px;top:42px;width:18px;height:4px;background:#ff0"></div><div style="position:absolute;left:52px;top:48px;width:60px;height:30px;background:rgba(250,200,180,.4)"></div></div>
 <div class="n" style="left:47px;top:246px">6.</div><div class="t" style="left:57px;top:246px">The table is having item name column, add two columns based on the following value, 1st</div>
 <div class="t" style="left:57px;top:253px">column contains a value based on the distinct item and 2nd column contains a value based on</div>
 <div class="t" style="left:57px;top:260px">the item by skipping the row if there is a tie as shown in the screenshot below. [Use Q6</div>
 <div class="t" style="left:57px;top:267px">sheet from DAX_Data.xlsx].</div>
 <div class="img" style="left:57px;top:278px;width:109px;height:106px;border:1px solid #ccc;background:#fff repeating-linear-gradient(to bottom,#fff 0 4px,#e8e8e8 4px 5px)"><div style="position:absolute;left:2px;top:2px;width:18px;height:4px;background:#ff0"></div><div style="position:absolute;left:20px;top:55px;width:26px;height:4px;background:#ff0"></div></div>
 <div class="n" style="left:47px;top:388px">7.</div><div class="t" style="left:57px;top:388px">Create a bar graph as shown below with previous year and present year sales month on</div>
 <div class="t" style="left:57px;top:396px">month basis. [Use Q7 sheet from DAX_Data.xlsx].</div>
</div>

<div class="pg" style="left:1374px;top:475px;height:460px">
 <div class="hb"><div>BDAT 1018</div><div>Business Intelligence</div></div>
 <svg style="position:absolute;left:57px;top:51px" width="146" height="106" viewBox="0 0 146 106"><rect width="146" height="106" fill="#fff"/>
  <rect x="54" y="6" width="39" height="16" fill="#fff" stroke="#ddd" stroke-width=".6"/>
  <rect x="16" y="32" width="114" height="66" fill="#fff" stroke="#e4e4e4" stroke-width=".6"/>
  <g fill="#118dff"><rect x="28" y="88" width="3" height="6"/><rect x="36" y="84" width="3" height="10"/><rect x="44" y="65" width="3" height="29"/><rect x="52" y="57" width="3" height="37"/><rect x="60" y="88" width="3" height="6"/><rect x="68" y="91" width="3" height="3"/><rect x="76" y="79" width="3" height="15"/><rect x="85" y="53" width="3" height="41"/><rect x="93" y="46" width="3" height="48"/><rect x="101" y="90" width="3" height="4"/><rect x="109" y="53" width="3" height="41"/><rect x="117" y="88" width="3" height="6"/></g>
  <g fill="#e66c37"><rect x="31" y="87" width="3" height="7"/><rect x="39" y="82" width="3" height="12"/><rect x="47" y="77" width="3" height="17"/><rect x="55" y="75" width="3" height="19"/><rect x="63" y="70" width="3" height="24"/><rect x="71" y="76" width="3" height="18"/><rect x="79" y="66" width="3" height="28"/><rect x="88" y="53" width="3" height="41"/><rect x="96" y="64" width="3" height="30"/><rect x="104" y="49" width="3" height="45"/><rect x="112" y="75" width="3" height="19"/><rect x="120" y="80" width="3" height="14"/></g></svg>
 <div class="n" style="left:47px;top:162px">8.</div><div class="t" style="left:57px;top:162px">Write a DAX function to create a filter (Region= "South") set of rows from an existing table</div>
 <div class="t" style="left:57px;top:169px">to a new table as shown in the snapshot below. [Use Q8 sheet from DAX_Data.xlsx].</div>
 <div class="img" style="left:57px;top:173px;width:83px;height:96px;background:#fff repeating-linear-gradient(to bottom,#fff 0 5px,#ececec 5px 10px)"></div>
 <div class="n" style="left:47px;top:274px">9.</div><div class="t" style="left:57px;top:274px">Create a bar graph as shown below with swapping axis as profit, sales, or quantity on a</div>
 <div class="t" style="left:57px;top:282px">parameter(slicer). [Use Q9 sheet from DAX_Data.xlsx].</div>
 <svg style="position:absolute;left:57px;top:293px" width="148" height="109" viewBox="0 0 148 109"><rect width="148" height="109" fill="#fff"/>
  <rect x="53" y="6" width="39" height="19" fill="#fff" stroke="#ddd" stroke-width=".6"/>
  <rect x="11" y="33" width="122" height="70" fill="#fff" stroke="#e4e4e4" stroke-width=".6"/>
  <g fill="#118dff"><rect x="25" y="67" width="6" height="27"/><rect x="34" y="48" width="6" height="46"/><rect x="42" y="67" width="6" height="27"/><rect x="51" y="54" width="6" height="40"/><rect x="59" y="54" width="6" height="40"/><rect x="68" y="63" width="6" height="31"/><rect x="76" y="52" width="6" height="42"/><rect x="85" y="72" width="6" height="22"/><rect x="93" y="48" width="6" height="46"/><rect x="101" y="43" width="6" height="51"/><rect x="110" y="75" width="6" height="19"/><rect x="118" y="64" width="6" height="30"/></g></svg>
</div>

<!-- STATUS -->
<div class="st">
 <div class="s" style="left:0">12</div>
 <div class="s" style="left:30px">1502 words</div>
 <div class="s" style="left:107px">⎕</div>
 <div class="s" style="left:139px">English (India)</div>
 <div class="s" style="left:230px">Text Predictions: On</div>
 <div class="s" style="left:352px">♿ Accessibility: Investigate</div>
 <div class="s" style="left:1500px">⛶ Focus</div>
 <div class="s" style="left:1574px">▤</div>
 <div class="s" style="left:1615px">▯</div>
 <div class="s" style="left:1656px">▦</div>
 <div class="s" style="left:1685px">-</div>
 <div style="position:absolute;left:1693px;top:7px;width:110px;height:1px;background:#bbb"></div>
 <div style="position:absolute;left:1702px;top:3px;width:2px;height:9px;background:#ddd"></div>
 <div class="s" style="left:1806px">+</div>
 <div class="s" style="left:1824px">4</div>
</div>
</body></html>
